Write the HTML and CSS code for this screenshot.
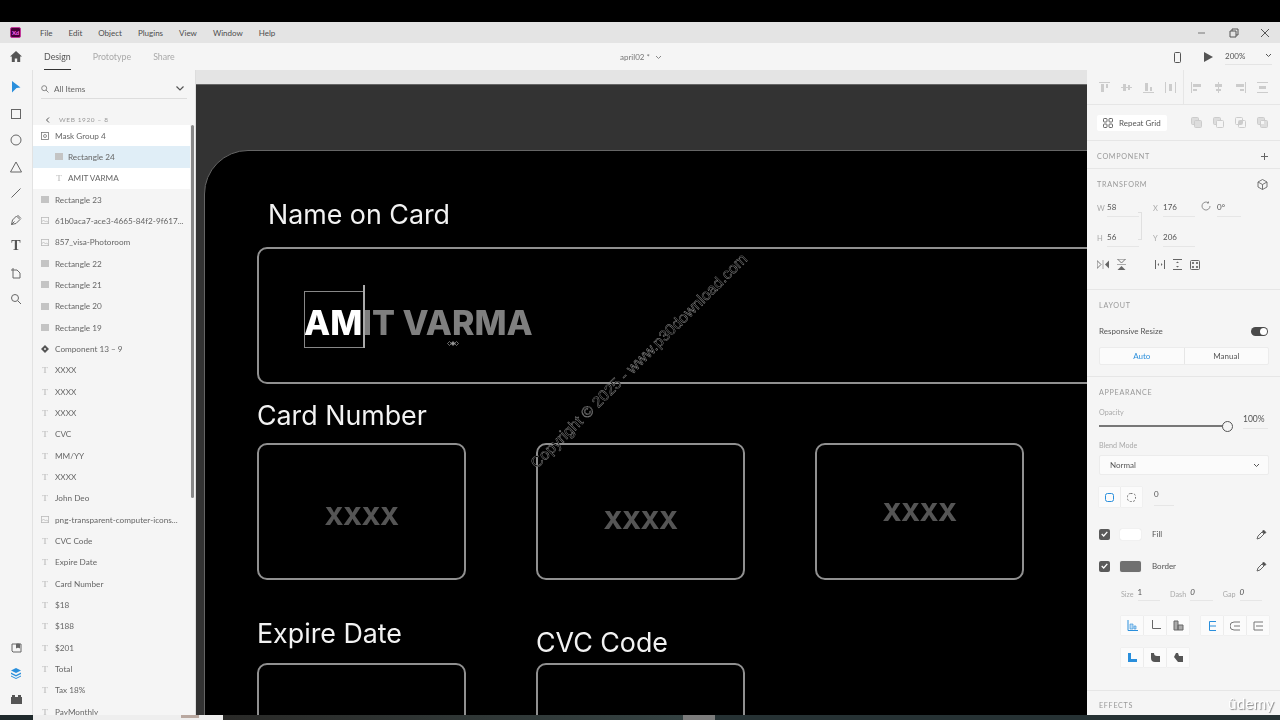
FILE: index.html
```html
<!DOCTYPE html>
<html lang="en">
<head>
  <meta charset="UTF-8">
  <title>april02 - Adobe XD</title>
  <link rel="stylesheet" href="styles.css">
</head>
<body>
  <div class="app">
    <div class="top-black"></div>

    <!-- Title bar -->
    <div class="titlebar">
      <div class="xd-logo">Xd</div>
      <nav class="menu">
        <span>File</span><span>Edit</span><span>Object</span><span>Plugins</span><span>View</span><span>Window</span><span>Help</span>
      </nav>
      <div class="win-btns">
        <svg width="10" height="10" viewBox="0 0 10 10"><path d="M0 5h7" stroke="#777" stroke-width="1"/></svg>
        <svg width="10" height="10" viewBox="0 0 10 10" fill="none" stroke="#555"><path d="M1 3h6v6H1zM3 3V1h6v6H7"/></svg>
        <svg width="10" height="10" viewBox="0 0 10 10" fill="none" stroke="#555"><path d="M1 1l8 8M9 1L1 9"/></svg>
      </div>
    </div>

    <!-- Tab bar -->
    <div class="tabbar">
      <svg class="home-icon" width="14" height="13" viewBox="0 0 14 13"><path d="M7 1L1 6.5h1.8V12h3V8.5h2.4V12h3V6.5H13z" fill="#555"/></svg>
      <div class="tab active">Design</div>
      <div class="tab">Prototype</div>
      <div class="tab">Share</div>
      <div class="doc-name">april02 * <svg width="7" height="5" viewBox="0 0 7 5" fill="none" stroke="#888"><path d="M1 1l2.5 2.5L6 1"/></svg></div>
      <svg class="phone-icon" width="7" height="11" viewBox="0 0 7 11" fill="none" stroke="#555"><rect x=".5" y=".5" width="6" height="10" rx="1"/></svg>
      <svg class="play-icon" width="9" height="10" viewBox="0 0 9 10"><path d="M0 0l9 5-9 5z" fill="#555"/></svg>
      <div class="zoom-box">200% <svg width="7" height="5" viewBox="0 0 7 5" fill="none" stroke="#555"><path d="M1 1l2.5 2.5L6 1"/></svg></div>
    </div>

    <div class="main">
      <!-- Left tools -->
      <aside class="tools">
        <svg width="10" height="12" viewBox="0 0 10 12"><path d="M1 0l8.500 6.500-4 .5L1 11.500z" fill="#2a8fdc"/></svg>
        <svg width="12" height="12" viewBox="0 0 12 12" fill="none" stroke="#666"><rect x="1.500" y="1.500" width="9" height="9"/></svg>
        <svg width="12" height="12" viewBox="0 0 12 12" fill="none" stroke="#666"><circle cx="6" cy="6" r="5"/></svg>
        <svg width="12" height="12" viewBox="0 0 12 12" fill="none" stroke="#666"><path d="M6 1l5.500 10H.5z"/></svg>
        <svg width="12" height="12" viewBox="0 0 12 12" fill="none" stroke="#666"><path d="M1.500 10.500l9-9"/></svg>
        <svg width="12" height="12" viewBox="0 0 12 12" fill="none" stroke="#666"><path d="M1.500 10.500l1-4.500 4-4 3.500 3.500-4 4zM1.500 10.500l3-3M7.500 1l3.500 3.500"/></svg>
        <div class="tool-t">T</div>
        <svg width="12" height="12" viewBox="0 0 12 12" fill="none" stroke="#666"><path d="M3 3h4l3 3v5H3zM1 3h2M3 1v2"/></svg>
        <svg width="12" height="12" viewBox="0 0 12 12" fill="none" stroke="#666"><circle cx="5" cy="5" r="3.500"/><path d="M8 8l3 3"/></svg>
        <div class="tools-bottom">
          <svg width="11" height="11" viewBox="0 0 11 11" fill="none" stroke="#666"><path d="M1 2h9v8H2l-1-1z"/><path d="M5.500 2h3v4l-1.500-1-1.500 1z" fill="#666"/></svg>
          <svg width="12" height="11" viewBox="0 0 12 11"><path d="M6 0l5 2.500-5 2.500-5-2.500z" fill="#2a8fdc"/><path d="M1 4.500l5 2.500 5-2.500v1.500l-5 2.500-5-2.500z" fill="#2a8fdc"/><path d="M1 7.500l5 2.500 5-2.500v1l-5 2.500-5-2.500z" fill="#2a8fdc"/></svg>
          <svg width="11" height="10" viewBox="0 0 11 10"><path d="M0 3h1V1h3v2h3V1h3v2h1v7H0z" fill="#555"/></svg>
        </div>
      </aside>

      <!-- Layers -->
      <aside class="layers">
        <div class="search-row">
          <svg width="8" height="8" viewBox="0 0 8 8" fill="none" stroke="#888"><circle cx="3.200" cy="3.200" r="2.500"/><path d="M5 5l2.500 2.500"/></svg>
          <span class="search-text">All Items</span>
          <svg class="search-chev" width="8" height="5" viewBox="0 0 8 5" fill="none" stroke="#555" stroke-width="1.200"><path d="M.5.5L4 4 7.500.5"/></svg>
        </div>
        <div class="crumb">
          <svg width="5" height="6" viewBox="0 0 5 6" fill="none" stroke="#555"><path d="M4 .5L1.500 3 4 5.500"/></svg>
          <span>WEB 1920 – 8</span>
        </div>
        <div class="layer-list">
          <div class="layer white"><svg class="lic" width="8" height="8" viewBox="0 0 8 8" fill="none" stroke="#777" stroke-width=".8"><rect x=".5" y=".5" width="7" height="7"/><circle cx="4" cy="4" r="1.500"/></svg>Mask Group 4</div>
          <div class="layer sel sub"><i class="sq"></i>Rectangle 24</div>
          <div class="layer white sub"><i class="ti">T</i>AMIT VARMA</div>
          <div class="layer"><i class="sq"></i>Rectangle 23</div>
          <div class="layer"><svg class="lic" width="8" height="7" viewBox="0 0 8 7" fill="none" stroke="#bbb" stroke-width=".8"><rect x=".4" y=".4" width="7.200" height="6.200"/><path d="M.5 5l2-2 2 2 1-1 2 1.500"/></svg>61b0aca7-ace3-4665-84f2-9f617...</div>
          <div class="layer"><svg class="lic" width="8" height="7" viewBox="0 0 8 7" fill="none" stroke="#bbb" stroke-width=".8"><rect x=".4" y=".4" width="7.200" height="6.200"/><path d="M.5 5l2-2 2 2 1-1 2 1.500"/></svg>857_visa-Photoroom</div>
          <div class="layer"><i class="sq"></i>Rectangle 22</div>
          <div class="layer"><i class="sq"></i>Rectangle 21</div>
          <div class="layer"><i class="sq"></i>Rectangle 20</div>
          <div class="layer"><i class="sq"></i>Rectangle 19</div>
          <div class="layer"><svg class="lic" width="8" height="8" viewBox="0 0 8 8"><path d="M4 0l4 4-4 4-4-4z" fill="#555"/><circle cx="4" cy="4" r="1" fill="#eee"/></svg>Component 13 – 9</div>
          <div class="layer"><i class="ti">T</i>XXXX</div>
          <div class="layer"><i class="ti">T</i>XXXX</div>
          <div class="layer"><i class="ti">T</i>XXXX</div>
          <div class="layer"><i class="ti">T</i>CVC</div>
          <div class="layer"><i class="ti">T</i>MM/YY</div>
          <div class="layer"><i class="ti">T</i>XXXX</div>
          <div class="layer"><i class="ti">T</i>John Deo</div>
          <div class="layer"><svg class="lic" width="8" height="7" viewBox="0 0 8 7" fill="none" stroke="#bbb" stroke-width=".8"><rect x=".4" y=".4" width="7.200" height="6.200"/><path d="M.5 5l2-2 2 2 1-1 2 1.500"/></svg>png-transparent-computer-icons...</div>
          <div class="layer"><i class="ti">T</i>CVC Code</div>
          <div class="layer"><i class="ti">T</i>Expire Date</div>
          <div class="layer"><i class="ti">T</i>Card Number</div>
          <div class="layer"><i class="ti">T</i>$18</div>
          <div class="layer"><i class="ti">T</i>$188</div>
          <div class="layer"><i class="ti">T</i>$201</div>
          <div class="layer"><i class="ti">T</i>Total</div>
          <div class="layer"><i class="ti">T</i>Tax 18%</div>
          <div class="layer"><i class="ti">T</i>PayMonthly</div>
          <div class="scrollbar"></div>
        </div>
      </aside>

      <!-- Canvas -->
      <section class="canvas-wrap">
        <div class="canvas-top"></div>
        <div class="canvas">
          <div class="artboard">
            <div class="ab-title t-name">Name on Card</div>
            <div class="field f-name"></div>
            <div class="amit"><span class="amit-on">AM</span>IT VARMA</div>
            <div class="sel-box"></div>
            <div class="text-caret"></div>
            <svg class="mini-cursor" width="12" height="5" viewBox="0 0 12 5" fill="none" stroke="#999" stroke-width=".7"><path d="M2.500.5l2 2-2 2-2-2zM9.500.5l2 2-2 2-2-2z"/><path d="M6 .5l2 2-2 2-2-2z" fill="#999"/></svg>

            <div class="ab-title t-card">Card Number</div>
            <div class="field f-c1"><span class="xxxx x1">XXXX</span></div>
            <div class="field f-c2"><span class="xxxx x2">XXXX</span></div>
            <div class="field f-c3"><span class="xxxx x3">XXXX</span></div>

            <div class="ab-title t-exp">Expire Date</div>
            <div class="ab-title t-cvc">CVC Code</div>
            <div class="field f-d1"></div>
            <div class="field f-d2"></div>
          </div>
          <div class="watermark">Copyright © 2025 - www.p30download.com</div>
        </div>
      </section>

      <!-- Properties -->
      <aside class="props">
        <div class="sect s-align">
          <div class="align-group g1">
            <svg width="11" height="11" viewBox="0 0 11 11" fill="#ccc"><path d="M0 0h11v1H0zM2 2h3v8H2zM7 2h2v4H7z"/></svg>
            <svg width="11" height="11" viewBox="0 0 11 11" fill="#ccc"><path d="M0 5h11v1H0zM2 2h3v7H2zM7 3h2v5H7z"/></svg>
            <svg width="11" height="11" viewBox="0 0 11 11" fill="#ccc"><path d="M0 10h11v1H0zM2 1h3v8H2zM7 5h2v4H7z"/></svg>
            <svg width="11" height="11" viewBox="0 0 11 11" fill="#ccc"><path d="M0 0h1v11H0zM10 0h1v11h-1zM4 2h3v7H4z"/></svg>
          </div>
          <div class="align-group g2">
            <svg width="11" height="11" viewBox="0 0 11 11" fill="#ccc"><path d="M0 0h1v11H0zM2 2h8v3H2zM2 7h4v2H2z"/></svg>
            <svg width="11" height="11" viewBox="0 0 11 11" fill="#ccc"><path d="M5 0h1v11H5zM2 2h7v3H2zM3 7h5v2H3z"/></svg>
            <svg width="11" height="11" viewBox="0 0 11 11" fill="#ccc"><path d="M10 0h1v11h-1zM1 2h8v3H1zM5 7h4v2H5z"/></svg>
            <svg width="11" height="11" viewBox="0 0 11 11" fill="#ccc"><path d="M0 0h11v1H0zM0 10h11v1H0zM2 4h7v3H2z"/></svg>
          </div>
        </div>

        <div class="sect s-grid">
          <div class="repeat-btn">
            <svg width="10" height="10" viewBox="0 0 10 10" fill="none" stroke="#555" stroke-width=".9"><rect x=".5" y=".5" width="3.500" height="3.500" rx=".8"/><rect x="6" y=".5" width="3.500" height="3.500" rx=".8"/><rect x=".5" y="6" width="3.500" height="3.500" rx=".8"/><rect x="6" y="6" width="3.500" height="3.500" rx=".8"/></svg>
            Repeat Grid
          </div>
          <div class="bool-icons">
            <svg width="11" height="11" viewBox="0 0 11 11" fill="#ddd" stroke="#ccc"><rect x=".5" y=".5" width="7" height="7" rx="1"/><rect x="3.500" y="3.500" width="7" height="7" rx="1"/></svg>
            <svg width="11" height="11" viewBox="0 0 11 11" fill="none" stroke="#ccc"><rect x=".5" y=".5" width="7" height="7" rx="1" fill="#ddd"/><rect x="3.500" y="3.500" width="7" height="7" rx="1" fill="#f5f5f5"/></svg>
            <svg width="11" height="11" viewBox="0 0 11 11" fill="none" stroke="#ccc"><rect x=".5" y=".5" width="7" height="7" rx="1"/><rect x="3.500" y="3.500" width="7" height="7" rx="1"/><rect x="4" y="4" width="3" height="3" fill="#ccc" stroke="none"/></svg>
            <svg width="11" height="11" viewBox="0 0 11 11" fill="#ddd" stroke="#ccc"><rect x=".5" y=".5" width="7" height="7" rx="1"/><rect x="3.500" y="3.500" width="7" height="7" rx="1"/><rect x="4" y="4" width="3" height="3" fill="#f5f5f5" stroke="none"/></svg>
          </div>
        </div>

        <div class="sect s-comp">
          <span class="label">COMPONENT</span>
          <svg width="7" height="7" viewBox="0 0 7 7" stroke="#666"><path d="M3.500 0v7M0 3.500h7"/></svg>
        </div>

        <div class="sect s-transform">
          <div class="label-row">
            <span class="label">TRANSFORM</span>
            <svg width="11" height="11" viewBox="0 0 11 11" fill="none" stroke="#666" stroke-width=".9"><path d="M5.500.5l4.500 2.500v5l-4.500 2.500L1 8V3zM1 3l4.500 2.500L10 3M5.500 5.500v5"/></svg>
          </div>
          <div class="tf-row r1">
            <span class="k">W</span><span class="v w-a">58</span>
            <span class="k kx">X</span><span class="v w-b">176</span>
            <svg class="rot" width="10" height="10" viewBox="0 0 10 10" fill="none" stroke="#777" stroke-width=".8"><path d="M9 5a4 4 0 1 1-1.500-3.100M7.500 .5v1.500H6"/></svg>
            <span class="v w-c">0°</span>
          </div>
          <div class="tf-row r2">
            <span class="k">H</span><span class="v w-a">56</span>
            <span class="k kx">Y</span><span class="v w-b">206</span>
          </div>
          <div class="lock"></div>
          <div class="flip-row">
            <svg width="12" height="9" viewBox="0 0 12 9"><path d="M0 .5l4 4-4 4z" fill="none" stroke="#777"/><path d="M12 .5l-4 4 4 4z" fill="#666"/><path d="M6 0v9" stroke="#aaa"/></svg>
            <svg width="9" height="11" viewBox="0 0 9 11"><path d="M.5 0l4 4 4-4z" fill="none" stroke="#777"/><path d="M.5 11l4-4 4 4z" fill="#666"/><path d="M0 5.500h9" stroke="#aaa"/></svg>
            <svg class="gap-a" width="10" height="9" viewBox="0 0 10 9" fill="#666"><path d="M0 0h1v9H0zM9 0h1v9H9zM2.500 4.500l1.500-1.500v3zM7.500 4.500L6 3v3z"/></svg>
            <svg width="9" height="11" viewBox="0 0 9 11" fill="#666"><path d="M0 0h9v1H0zM0 10h9v1H0zM4.500 2.500L3 4h3zM4.500 8.500L3 7h3z"/></svg>
            <svg width="10" height="10" viewBox="0 0 10 10" fill="none" stroke="#666"><rect x=".5" y=".5" width="9" height="9" rx="1"/><circle cx="3" cy="3" r=".7" fill="#666"/><circle cx="7" cy="3" r=".7" fill="#666"/><circle cx="3" cy="7" r=".7" fill="#666"/><circle cx="7" cy="7" r=".7" fill="#666"/></svg>
          </div>
        </div>

        <div class="sect s-layout">
          <span class="label">LAYOUT</span>
          <div class="resp-row">
            <span>Responsive Resize</span>
            <div class="toggle"><i></i></div>
          </div>
          <div class="seg">
            <div class="seg-item on">Auto</div>
            <div class="seg-item">Manual</div>
          </div>
        </div>

        <div class="sect s-appearance">
          <span class="label">APPEARANCE</span>
          <div class="op-row">
            <div class="op-left">
              <span class="small">Opacity</span>
              <div class="slider"><i></i></div>
            </div>
            <span class="op-val">100%</span>
          </div>
          <span class="small blend-label">Blend Mode</span>
          <div class="blend">Normal <svg width="7" height="5" viewBox="0 0 7 5" fill="none" stroke="#555"><path d="M1 1l2.500 2.500L6 1"/></svg></div>
          <div class="corner-row">
            <div class="corner-pair">
              <div class="cbtn"><svg width="9" height="9" viewBox="0 0 9 9" fill="none" stroke="#2a8fdc"><rect x=".5" y=".5" width="8" height="8" rx="2"/></svg></div>
              <div class="cbtn"><svg width="9" height="9" viewBox="0 0 9 9" fill="none" stroke="#777" stroke-dasharray="2 1.500"><rect x=".5" y=".5" width="8" height="8" rx="3"/></svg></div>
            </div>
            <span class="corner-val">0</span>
          </div>
          <div class="paint-row first">
            <i class="check"><svg width="7" height="6" viewBox="0 0 7 6" fill="none" stroke="#fff" stroke-width="1.300"><path d="M.7 3l2 2L6.300.8"/></svg></i>
            <i class="swatch fill"></i>
            <span>Fill</span>
            <svg class="dropper" width="11" height="11" viewBox="0 0 11 11" fill="none" stroke="#666"><path d="M1 10l1-3 4-4 2 2-4 4z"/><path d="M6.500 2.500l1-1.500 2.500 2.500-1.500 1z" fill="#444"/></svg>
          </div>
          <div class="paint-row">
            <i class="check"><svg width="7" height="6" viewBox="0 0 7 6" fill="none" stroke="#fff" stroke-width="1.300"><path d="M.7 3l2 2L6.300.8"/></svg></i>
            <i class="swatch border"></i>
            <span>Border</span>
            <svg class="dropper" width="11" height="11" viewBox="0 0 11 11" fill="none" stroke="#666"><path d="M1 10l1-3 4-4 2 2-4 4z"/><path d="M6.500 2.500l1-1.500 2.500 2.500-1.500 1z" fill="#444"/></svg>
          </div>
          <div class="stroke-row">
            <span class="small">Size</span><span class="sv">1</span>
            <span class="small">Dash</span><span class="sv em">0</span>
            <span class="small">Gap</span><span class="sv em">0</span>
          </div>
          <div class="btn-row">
            <div class="btn-group">
              <div class="cbtn"><svg width="11" height="11" viewBox="0 0 11 11" fill="#bcdcf4" stroke="#2a8fdc"><path d="M1 0v10.500h10" fill="none"/><path d="M3 4h3v5H3zM7 6h2v3H7z" stroke-width=".6"/></svg></div>
              <div class="cbtn"><svg width="11" height="11" viewBox="0 0 11 11" fill="none" stroke="#666"><path d="M2.500 0v8.500H11"/></svg></div>
              <div class="cbtn"><svg width="11" height="11" viewBox="0 0 11 11" fill="#aaa" stroke="#666"><path d="M1 1h4v9H1zM5 5h5v5H5z"/></svg></div>
            </div>
            <div class="btn-group">
              <div class="cbtn"><svg width="9" height="10" viewBox="0 0 9 10" fill="none" stroke="#2a8fdc"><path d="M8 .5H1.500v9H8M1.500 5H8"/></svg></div>
              <div class="cbtn"><svg width="11" height="10" viewBox="0 0 11 10" fill="none" stroke="#777"><path d="M10 1H4a4 4 0 0 0 0 8h6M4 5h6"/></svg></div>
              <div class="cbtn"><svg width="11" height="10" viewBox="0 0 11 10" fill="none" stroke="#777"><path d="M10 1H1v8h9M3 5h7"/></svg></div>
            </div>
          </div>
          <div class="btn-group join-row">
            <div class="cbtn"><svg width="9" height="9" viewBox="0 0 9 9"><path d="M0 0h3v6h6v3H0z" fill="#2a8fdc"/></svg></div>
            <div class="cbtn"><svg width="9" height="9" viewBox="0 0 9 9"><path d="M0 0h3q0 3 3 3h3v6H4Q0 9 0 5z" fill="#555"/></svg></div>
            <div class="cbtn"><svg width="9" height="9" viewBox="0 0 9 9"><path d="M2 0h2l1 3h4v6H4L0 4z" fill="#555"/></svg></div>
          </div>
        </div>

        <div class="sect s-effects"><span class="label">EFFECTS</span></div>
      </aside>
    </div>

    <!-- Windows taskbar, mostly cut off by the recording -->
    <div class="taskbar">
      <div class="tb-white"><i></i></div>
      <div class="tb-mid"></div>
      <div class="tb-active"></div>
      <div class="tb-right"></div>
    </div>
    <div class="udemy">ûdemy</div>
  </div>
</body>
</html>
```

FILE: styles.css
```css
* {
  box-sizing: border-box;
}
html, body {
  margin: 0;
  padding: 0;
  height: 100%;
  overflow: hidden;
}
body {
  font-family: "Lato", "Open Sans", sans-serif;
  color: #555;
  background: #000;
}
.app {
  position: relative;
  width: 1280px;
  height: 720px;
  display: flex;
  flex-direction: column;
  overflow: hidden;
  filter: blur(0.35px);
}
.top-black {
  height: 22px;
  background: #000;
}

/* title bar */
.titlebar {
  height: 21px;
  background: #e4e4e4;
  display: flex;
  align-items: center;
  padding-left: 10px;
  font-size: 8px;
}
.xd-logo {
  width: 11px;
  height: 11px;
  background: #470137;
  border: 1px solid #c23a9c;
  border-radius: 2px;
  color: #ff61f6;
  font-size: 6px;
  font-weight: 700;
  line-height: 9px;
  text-align: center;
}
.menu {
  display: flex;
  gap: 16px;
  margin-left: 19px;
  color: #4d4d4d;
}
.win-btns {
  margin-left: auto;
  display: flex;
  gap: 21px;
  padding-right: 10px;
}

/* tabs */
.tabbar {
  height: 27px;
  background: #f5f5f5;
  display: flex;
  align-items: center;
  position: relative;
  padding-left: 9px;
  font-size: 8px;
}
.home-icon {
  margin-right: 21px;
}
.tab {
  height: 27px;
  line-height: 28px;
  margin-right: 22px;
  color: #aaa;
  font-size: 8.800px;
}
.tab.active {
  color: #555;
  border-bottom: 1px solid #333;
}
.doc-name {
  position: absolute;
  left: 620px;
  top: 9px;
  font-size: 8px;
  color: #777;
  display: flex;
  align-items: center;
  gap: 5px;
}
.phone-icon {
  position: absolute;
  left: 1174px;
  top: 9px;
}
.play-icon {
  position: absolute;
  left: 1204px;
  top: 9px;
}
.zoom-box {
  position: absolute;
  left: 1225px;
  top: 4px;
  width: 47px;
  height: 18px;
  border-bottom: 1px solid #e4e4e4;
  display: flex;
  justify-content: space-between;
  align-items: center;
  font-size: 8px;
}

/* main area */
.main {
  flex: 1;
  display: flex;
  min-height: 0;
  height: 645px;
}
.tools {
  width: 33px;
  background: #f5f5f5;
  border-right: 1px solid #e2e2e2;
  display: flex;
  flex-direction: column;
  align-items: center;
  padding-top: 11px;
  gap: 14.500px;
}
.tool-t {
  font-family: "Liberation Serif", serif;
  font-size: 14px;
  font-weight: 700;
  line-height: 12px;
  color: #555;
}
.tools-bottom {
  margin-top: auto;
  padding-bottom: 11px;
  display: flex;
  flex-direction: column;
  align-items: center;
  gap: 15px;
}

/* layers panel */
.layers {
  width: 163px;
  background: #f5f5f5;
  border-right: 1px solid #ddd;
  display: flex;
  flex-direction: column;
  font-size: 8.200px;
}
.search-row {
  height: 29px;
  margin: 0 8px 0 8px;
  border-bottom: 1px solid #ddd;
  display: flex;
  align-items: center;
  gap: 5px;
  padding-top: 9px;
  color: #666;
}
.search-chev {
  margin-left: auto;
  margin-right: 3px;
}
.crumb {
  height: 26px;
  padding: 15px 0 0 12px;
  display: flex;
  align-items: center;
  gap: 9px;
  color: #999;
  font-size: 6.500px;
  letter-spacing: 0.6px;
}
.layer-list {
  flex: 1;
  position: relative;
  overflow: hidden;
  padding-right: 5px;
}
.layer {
  height: 21.330px;
  display: flex;
  align-items: center;
  padding-left: 8px;
  color: #666;
  white-space: nowrap;
}
.layer.white {
  background: #fff;
}
.layer.sel {
  background: #e0eef7;
}
.layer.sub {
  padding-left: 22px;
}
.lic,
.sq,
.ti {
  flex: none;
  width: 8px;
  margin-right: 6px;
}
.sq {
  height: 7px;
  background: #c4c4c4;
}
.ti {
  font-family: "Liberation Serif", serif;
  font-style: normal;
  font-size: 9px;
  color: #b5b5b5;
  text-align: center;
}
.layer.sub .sq,
.layer.sub .ti {
  margin-right: 5px;
}
.scrollbar {
  position: absolute;
  right: 1px;
  top: 0;
  width: 3px;
  height: 373px;
  background: #888;
  border-radius: 2px;
}

/* canvas */
.canvas-wrap {
  width: 891px;
  display: flex;
  flex-direction: column;
}
.canvas-top {
  height: 15px;
  background: #e4e4e4;
  border-bottom: 1px solid #666;
}
.canvas {
  flex: 1;
  background: #333;
  position: relative;
  overflow: hidden;
}
.artboard {
  position: absolute;
  left: 8px;
  top: 65px;
  width: 1100px;
  height: 700px;
  background: #000;
  border: 1px solid #666;
  border-radius: 44px 0 0 0;
  font-family: "Inter", sans-serif;
}
.ab-title {
  position: absolute;
  color: #f2f2f2;
  font-size: 26.800px;
  line-height: 30px;
  white-space: nowrap;
}
.t-name { left: 63px; top: 48px; }
.t-card { left: 52px; top: 249px; }
.t-exp  { left: 52px; top: 467px; }
.t-cvc  { left: 331px; top: 476px; }
.field {
  position: absolute;
  border: 2px solid #909090;
  border-radius: 10px;
  width: 209px;
  height: 137px;
  display: flex;
  align-items: center;
  justify-content: center;
}
.f-name { left: 52px; top: 96px; width: 1000px; }
.f-c1 { left: 52px; top: 292px; }
.f-c2 { left: 331px; top: 292px; }
.f-c3 { left: 610px; top: 292px; }
.f-d1 { left: 52px; top: 512px; }
.f-d2 { left: 331px; top: 512px; }
.xxxx {
  color: #555;
  font-size: 25px;
  font-weight: 800;
  letter-spacing: -0.5px;
  position: relative;
}
.x1 { top: 4px; }
.x2 { top: 8px; }
.x3 { top: 0; }
.amit {
  position: absolute;
  left: 99px;
  top: 151px;
  font-size: 34px;
  line-height: 42px;
  font-weight: 800;
  color: #7f7f7f;
  white-space: nowrap;
}
.amit-on {
  color: #fff;
}
.sel-box {
  position: absolute;
  left: 99px;
  top: 140px;
  width: 60px;
  height: 57px;
  border: 1px solid #888;
}
.text-caret {
  position: absolute;
  left: 158px;
  top: 134px;
  width: 2px;
  height: 63px;
  background: #aaa;
}
.mini-cursor {
  position: absolute;
  left: 242px;
  top: 190px;
}
.watermark {
  position: absolute;
  left: 443px;
  top: 264px;
  width: 0;
  display: flex;
  justify-content: center;
  white-space: nowrap;
  font-family: "Liberation Sans", sans-serif;
  font-size: 15.500px;
  line-height: 24px;
  color: #000;
  -webkit-text-stroke: 0.4px #999;
  transform: rotate(-44.700deg);
}

/* right panel */
.props {
  width: 193px;
  background: #f5f5f5;
  font-size: 8px;
  color: #555;
  overflow: hidden;
}
.sect {
  border-bottom: 1px solid #e6e6e6;
  padding: 0 12px;
}
.label {
  font-size: 7.200px;
  letter-spacing: 0.7px;
  color: #999;
}
.s-align {
  height: 35px;
  display: flex;
  padding: 0;
}
.align-group {
  display: flex;
  align-items: center;
  height: 35px;
  gap: 11px;
}
.g1 {
  width: 97px;
  padding-left: 12px;
  border-right: 1px solid #e6e6e6;
}
.g2 {
  padding-left: 7px;
}
.s-grid {
  height: 36px;
  display: flex;
  align-items: center;
  padding: 0 0 0 10px;
}
.repeat-btn {
  width: 70px;
  height: 16px;
  background: #fff;
  border-radius: 2px;
  display: flex;
  align-items: center;
  gap: 6px;
  padding-left: 6px;
  color: #555;
}
.bool-icons {
  margin-left: 24px;
  display: flex;
  gap: 11px;
}
.s-comp {
  height: 28px;
  display: flex;
  align-items: center;
  justify-content: space-between;
  padding: 3px 12px 0 10px;
}
.s-transform {
  height: 121px;
  padding: 9px 12px 0 10px;
  position: relative;
}
.label-row {
  display: flex;
  justify-content: space-between;
  align-items: center;
  height: 13px;
}
.tf-row {
  display: flex;
  align-items: center;
  height: 17px;
  position: relative;
}
.r1 { margin-top: 9px; }
.r2 { margin-top: 13px; }
.k {
  width: 10px;
  font-size: 7.500px;
  color: #aaa;
}
.kx {
  margin-left: 14px;
}
.v {
  border-bottom: 1px solid #e6e6e6;
  height: 17px;
  line-height: 15px;
  color: #555;
}
.w-a { width: 32px; }
.w-b { width: 32px; }
.w-c { width: 24px; margin-left: 6px; }
.rot {
  margin-left: 6px;
  margin-top: -6px;
}
.lock {
  position: absolute;
  left: 51px;
  top: 43px;
  width: 4px;
  height: 28px;
  border: 1px solid #e0e0e0;
  border-left: 0;
}
.flip-row {
  display: flex;
  align-items: center;
  gap: 8px;
  margin-top: 12px;
}
.gap-a {
  margin-left: 21px;
}
.s-layout {
  height: 87px;
  padding: 10px 12px 0 12px;
}
.resp-row {
  display: flex;
  justify-content: space-between;
  align-items: center;
  margin-top: 13px;
  height: 16px;
}
.toggle {
  width: 17px;
  height: 9px;
  background: #4a4a4a;
  border-radius: 5px;
  position: relative;
}
.toggle i {
  position: absolute;
  right: 1px;
  top: 1px;
  width: 7px;
  height: 7px;
  background: #fff;
  border-radius: 50%;
}
.seg {
  display: flex;
  margin-top: 8px;
  height: 18px;
  width: 170px;
  background: #fbfbfb;
  border: 1px solid #ececec;
  border-radius: 2px;
}
.seg-item {
  flex: 1;
  text-align: center;
  line-height: 16px;
}
.seg-item.on {
  color: #2a8fdc;
  border-right: 1px solid #e6e6e6;
}
.s-appearance {
  height: 314px;
  padding: 10px 12px 0 12px;
}
.small {
  font-size: 7.200px;
  color: #aaa;
}
.op-row {
  display: flex;
  gap: 5px;
  margin-top: 10px;
}
.op-left {
  width: 139px;
}
.slider {
  height: 2px;
  width: 125px;
  background: #777;
  margin-top: 8px;
  position: relative;
}
.slider i {
  position: absolute;
  right: -9px;
  top: -4px;
  width: 11px;
  height: 11px;
  background: #f5f5f5;
  border: 1.500px solid #555;
  border-radius: 50%;
}
.op-val {
  width: 25px;
  height: 15px;
  margin-top: 7px;
  border-bottom: 1px solid #e6e6e6;
  font-size: 8.500px;
}
.blend-label {
  display: block;
  margin-top: 12px;
  line-height: 10px;
}
.blend {
  margin-top: 4px;
  height: 20px;
  width: 170px;
  background: #fbfbfb;
  border: 1px solid #ececec;
  border-radius: 2px;
  display: flex;
  justify-content: space-between;
  align-items: center;
  padding: 0 8px 0 10px;
}
.corner-row {
  display: flex;
  align-items: center;
  margin-top: 12px;
}
.corner-pair {
  display: flex;
  gap: 1px;
}
.corner-pair .cbtn {
  width: 21px;
  height: 20px;
}
.corner-val {
  margin-left: 12px;
  width: 20px;
  border-bottom: 1px solid #e6e6e6;
  height: 17px;
}
.cbtn {
  width: 22px;
  height: 19px;
  background: #fbfbfb;
  box-shadow: 0 0 1px #ddd;
  display: flex;
  align-items: center;
  justify-content: center;
}
.paint-row {
  display: flex;
  align-items: center;
  height: 12px;
  margin-top: 20px;
  position: relative;
}
.paint-row.first {
  margin-top: 21px;
}
.check {
  width: 11px;
  height: 11px;
  background: #5a5a5a;
  border-radius: 2px;
  display: flex;
  align-items: center;
  justify-content: center;
  margin-right: 10px;
}
.swatch {
  width: 21px;
  height: 11px;
  border-radius: 2px;
  margin-right: 11px;
  box-shadow: 0 0 1px #ccc;
}
.swatch.fill {
  background: #fff;
}
.swatch.border {
  background: #707070;
}
.dropper {
  margin-left: auto;
  margin-right: 1px;
}
.stroke-row {
  display: flex;
  align-items: center;
  margin-top: 15px;
  padding-left: 22px;
  gap: 4px;
}
.sv {
  width: 25px;
  height: 14px;
  margin-right: 6px;
  border-bottom: 1px solid #e6e6e6;
}
.sv.em {
  font-style: italic;
}
.btn-row {
  display: flex;
  gap: 12px;
  margin-top: 15px;
  padding-left: 22px;
}
.btn-group {
  display: flex;
  gap: 1px;
}
.join-row {
  margin-top: 13px;
  margin-left: 22px;
}
.s-effects {
  height: 30px;
  border-bottom: 0;
  padding-top: 9px;
}

/* bottom */
.taskbar {
  height: 5px;
  background: #1f2a2c;
  position: relative;
  display: flex;
}
.tb-white {
  margin-left: 33px;
  width: 190px;
  background: #eee;
  position: relative;
}
.tb-white i {
  position: absolute;
  left: 148px;
  top: 0;
  width: 18px;
  height: 3px;
  background: #b9a8a0;
}
.tb-mid {
  width: 460px;
  background: linear-gradient(90deg, #2a2a28, #344242);
}
.tb-active {
  width: 32px;
  background: #7c7c7c;
}
.tb-right {
  flex: 1;
  background: #263234;
}
.udemy {
  position: absolute;
  left: 1228px;
  top: 693px;
  font-family: "Lato", sans-serif;
  font-size: 15.500px;
  line-height: 20px;
  color: #fff;
  text-shadow: 1px 1px 1px #888;
}
```
